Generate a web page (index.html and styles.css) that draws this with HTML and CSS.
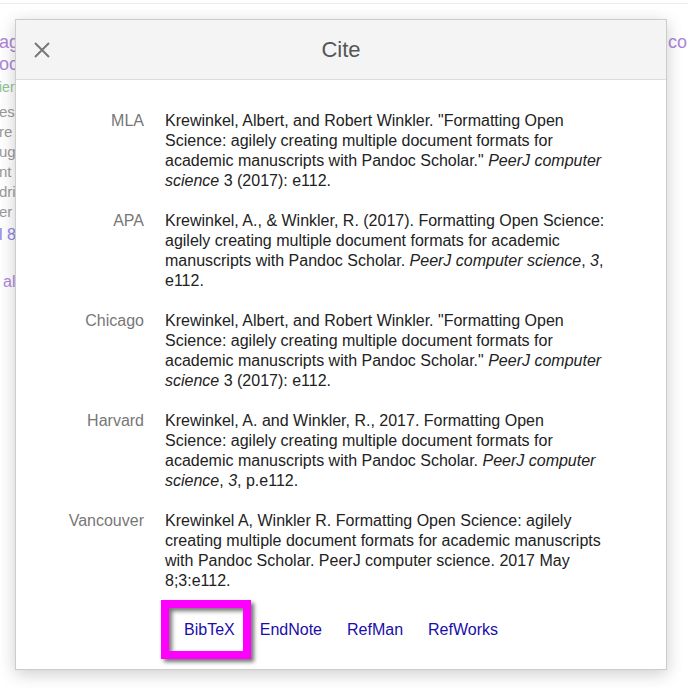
FILE: index.html
```html
<!DOCTYPE html>
<html lang="en">
<head>
<meta charset="utf-8">
<title>Cite</title>
<link rel="stylesheet" href="styles.css">
</head>
<body>
<div class="topbar"></div>
<div class="page">
  <div class="bg-left">
    <div class="t-title">agement</div>
    <div class="t-title">ocument</div>
    <div class="t-green">ience</div>
    <div class="t-gray">es of the</div>
    <div class="t-gray">re ab</div>
    <div class="t-gray">ugh the</div>
    <div class="t-gray">nt and</div>
    <div class="t-gray">drive</div>
    <div class="t-gray">er of</div>
    <div class="t-blue">l 8 related</div>
    <div class="t-purple">all</div>
  </div>
  <div class="bg-right">
    <div class="t-title">co</div>
  </div>
</div>

<div class="dialog" role="dialog" aria-label="Cite">
  <div class="dialog-head">
    <button class="close" aria-label="Close">
      <svg width="16" height="16" viewBox="0 0 16 16"><path d="M1 1 L15 15 M15 1 L1 15" stroke="#777" stroke-width="2" fill="none"/></svg>
    </button>
    <div class="title">Cite</div>
    <div></div>
  </div>
  <div class="dialog-body">
    <div class="cites">
      <div class="label">MLA</div>
      <div class="text">Krewinkel, Albert, and Robert Winkler. "Formatting Open Science: agilely creating multiple document formats for academic manuscripts with Pandoc Scholar." <i>PeerJ computer science</i> 3 (2017): e112.</div>
      <div class="label">APA</div>
      <div class="text">Krewinkel, A., &amp; Winkler, R. (2017). Formatting Open Science: agilely creating multiple document formats for academic manuscripts with Pandoc Scholar. <i>PeerJ computer science</i>, <i>3</i>, e112.</div>
      <div class="label">Chicago</div>
      <div class="text">Krewinkel, Albert, and Robert Winkler. "Formatting Open Science: agilely creating multiple document formats for academic manuscripts with Pandoc Scholar." <i>PeerJ computer science</i> 3 (2017): e112.</div>
      <div class="label">Harvard</div>
      <div class="text">Krewinkel, A. and Winkler, R., 2017. Formatting Open Science: agilely creating multiple document formats for academic manuscripts with Pandoc Scholar. <i>PeerJ computer science</i>, <i>3</i>, p.e112.</div>
      <div class="label">Vancouver</div>
      <div class="text">Krewinkel A, Winkler R. Formatting Open Science: agilely creating multiple document formats for academic manuscripts with Pandoc Scholar. PeerJ computer science. 2017 May 8;3:e112.</div>
    </div>
    <div class="links">
      <a class="link highlight" href="#">BibTeX</a>
      <a class="link" href="#">EndNote</a>
      <a class="link" href="#">RefMan</a>
      <a class="link" href="#">RefWorks</a>
    </div>
  </div>
</div>
</body>
</html>
```
FILE: styles.css
```css
html, body {
  margin: 0;
  padding: 0;
  background: #fff;
  font-family: "Liberation Sans", Arial, sans-serif;
  overflow: hidden;
}

.topbar {
  height: 3px;
  border-bottom: 1px solid #ebebeb;
}

.page {
  display: flex;
  justify-content: space-between;
  padding-top: 27px;
  height: 640px;
}

.bg-left {
  width: 60px;
  margin-left: -1px;
  white-space: nowrap;
}

.bg-right {
  width: 20px;
  white-space: nowrap;
}

.t-title {
  font-size: 18px;
  line-height: 22px;
  color: #ad86d8;
}

.t-green {
  font-size: 14px;
  line-height: 20px;
  margin-top: 2px;
  color: #8dc38d;
}

.t-gray {
  font-size: 15px;
  line-height: 20px;
  color: #9a9a9a;
}

.t-green + .t-gray {
  margin-top: 5px;
}

.t-blue {
  font-size: 16px;
  line-height: 20px;
  margin-top: 3px;
  color: #8a86e6;
}

.t-purple {
  font-size: 16px;
  line-height: 20px;
  margin-top: 27px;
  padding-left: 4px;
  color: #b08ad8;
}

.dialog {
  position: absolute;
  left: 15px;
  top: 19px;
  width: 650px;
  background: #fff;
  border: 1px solid #cccccc;
  box-shadow: 0 4px 16px rgba(0, 0, 0, 0.2);
}

.dialog-head {
  height: 59px;
  background: #f4f4f4;
  border-bottom: 1px solid #dcdcdc;
  display: grid;
  grid-template-columns: 1fr auto 1fr;
  align-items: center;
}

.close {
  justify-self: start;
  margin-left: 18px;
  margin-top: 1px;
  padding: 0;
  border: 0;
  background: none;
  width: 16px;
  height: 16px;
  display: flex;
}

.title {
  font-size: 22px;
  color: #555;
}

.dialog-body {
  padding: 31px 0 29px 0;
}

.cites {
  display: grid;
  grid-template-columns: 128px 442px;
  column-gap: 21px;
  row-gap: 20px;
  font-size: 16px;
  line-height: 20px;
}

.label {
  text-align: right;
  color: #777;
}

.text {
  color: #222;
}

.links {
  margin-top: 29px;
  display: flex;
  justify-content: center;
  gap: 25px;
  font-size: 16px;
  line-height: 20px;
}

.link {
  color: #1a0dab;
  text-decoration: none;
  display: inline-block;
  position: relative;
}

.highlight::after {
  content: "";
  position: absolute;
  left: -23px;
  top: -20px;
  width: 90px;
  height: 59px;
  box-sizing: border-box;
  border: 8px solid #ff00ff;
  box-shadow: 3px 3px 4px rgba(0, 0, 0, 0.55), inset 3px 3px 4px rgba(0, 0, 0, 0.55);
}
```
